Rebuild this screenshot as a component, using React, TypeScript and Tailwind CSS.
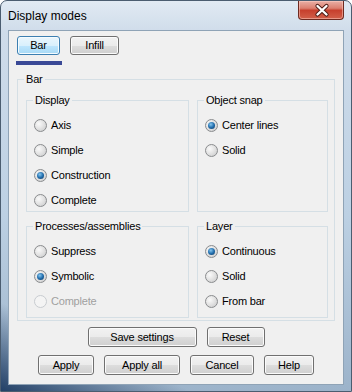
import type { ReactNode } from 'react'

function Radio({ checked, disabled }: { checked?: boolean; disabled?: boolean }) {
  return (
    <span
      className={
        disabled
          ? 'flex size-[13px] shrink-0 items-center justify-center rounded-full border border-[#c8ccd0] bg-[#f4f4f4]'
          : 'flex size-[13px] shrink-0 items-center justify-center rounded-full border border-[#8a8c8e] bg-[radial-gradient(circle_at_35%_35%,#fafafa_0%,#e4e4e4_45%,#c6c7c8_100%)]'
      }
    >
      {checked && (
        <span className="size-[7px] rounded-full bg-[radial-gradient(circle_at_40%_35%,#86c6ee_0%,#236fae_50%,#0c355c_100%)]" />
      )}
    </span>
  )
}

function Option({ label, checked, disabled }: { label: string; checked?: boolean; disabled?: boolean }) {
  return (
    <label className={`flex h-[16px] items-center gap-[4px] ${disabled ? 'text-[#a0a0a0]' : 'text-black'}`}>
      <Radio checked={checked} disabled={disabled} />
      <span className="leading-[14px]">{label}</span>
    </label>
  )
}

function Group({ label, className = '', children }: { label: string; className?: string; children: ReactNode }) {
  return (
    <fieldset className={`min-w-0 border border-[#d5dfe5] ${className}`}>
      <legend className="ml-[6px] px-[2px] leading-[14px]">{label}</legend>
      {children}
    </fieldset>
  )
}

function Button({ label, width, active }: { label: string; width: string; active?: boolean }) {
  return (
    <button
      type="button"
      className={`${width} flex items-center justify-center rounded-[3px] border leading-none ${
        active
          ? 'border-[#3c7fb1] bg-[linear-gradient(#eaf6fd_0%,#d9f0fc_50%,#bee6fd_51%,#a7d9f5_100%)] shadow-[inset_0_0_0_1px_#f4fbff]'
          : 'border-[#707070] bg-[linear-gradient(#f2f2f2_0%,#ebebeb_50%,#dddddd_51%,#cfcfcf_100%)] shadow-[inset_0_0_0_1px_#fbfbfb]'
      }`}
    >
      {label}
    </button>
  )
}

export default function App() {
  return (
    <div className="flex h-[392px] w-[352px] flex-col overflow-hidden rounded-t-[7px] border border-[#4b5d70] bg-[linear-gradient(25deg,rgba(22,52,92,0.9)_0%,rgba(22,52,92,0)_16%),linear-gradient(180deg,#e1eaf3_0%,#cfdcea_8%,#bcd0e3_55%,#9cb3ca_100%)] text-black [font-family:'Liberation_Sans',Arial,sans-serif]">
      {/* Title bar */}
      <div className="flex h-[29px] shrink-0">
        <span className="self-center pt-[1px] pl-[7px] text-[12px] leading-[14px]">Display modes</span>
        <button
          type="button"
          aria-label="Close"
          className="mr-[7px] ml-auto h-[19px] w-[46px] rounded-b-[4px] border border-t-0 border-[#6e2a20] bg-[linear-gradient(#eab0a6_0%,#dc7f70_40%,#c7402d_52%,#d2604a_100%)] shadow-[inset_0_0_0_1px_rgba(255,210,200,0.5)]"
        >
          <svg width="46" height="19" viewBox="0 0 46 19" className="block">
            <path d="M18.5 5 L27.5 13.5 M27.5 5 L18.5 13.5" stroke="#4a1a14" strokeWidth="4.2" strokeLinecap="round" />
            <path d="M18.5 5 L27.5 13.5 M27.5 5 L18.5 13.5" stroke="#ffffff" strokeWidth="2.4" strokeLinecap="round" />
          </svg>
        </button>
      </div>

      {/* Client area */}
      <div className="mx-[7px] mb-[6px] flex flex-1 flex-col border border-[#8fa3b6] bg-[#f0f0f0] px-[8px] pt-[5px] text-[11px] tracking-[-0.2px]">
        <div className="flex h-[19px] gap-[10px]">
          <Button label="Bar" width="w-[43px]" active />
          <Button label="Infill" width="w-[49px]" />
        </div>
        <div className="mt-[6px] -ml-[1px] h-[4px] w-[46px] bg-[#3a4996]" />

        <Group label="Bar" className="mt-[7px]">
          <div className="grid grid-cols-[163px_131px] gap-x-[8px] gap-y-[7px] pt-[7px] pr-[6px] pb-[2px] pl-[8px]">
            <Group label="Display">
              <div className="flex flex-col gap-[9px] pt-[10px] pb-[3px] pl-[7px]">
                <Option label="Axis" />
                <Option label="Simple" />
                <Option label="Construction" checked />
                <Option label="Complete" />
              </div>
            </Group>
            <Group label="Object snap">
              <div className="flex flex-col gap-[9px] pt-[10px] pl-[7px]">
                <Option label="Center lines" checked />
                <Option label="Solid" />
              </div>
            </Group>
            <Group label="Processes/assemblies">
              <div className="flex flex-col gap-[9px] pt-[10px] pb-[8px] pl-[7px]">
                <Option label="Suppress" />
                <Option label="Symbolic" checked />
                <Option label="Complete" disabled />
              </div>
            </Group>
            <Group label="Layer">
              <div className="flex flex-col gap-[9px] pt-[10px] pb-[8px] pl-[7px]">
                <Option label="Continuous" checked />
                <Option label="Solid" />
                <Option label="From bar" />
              </div>
            </Group>
          </div>
        </Group>

        <div className="mt-[6px] flex h-[20px] justify-center gap-[10px]">
          <Button label="Save settings" width="w-[109px]" />
          <Button label="Reset" width="w-[58px]" />
        </div>
        <div className="mt-[8px] flex h-[20px] justify-center gap-[10px]">
          <Button label="Apply" width="w-[56px]" />
          <Button label="Apply all" width="w-[76px]" />
          <Button label="Cancel" width="w-[64px]" />
          <Button label="Help" width="w-[50px]" />
        </div>
      </div>
    </div>
  )
}
